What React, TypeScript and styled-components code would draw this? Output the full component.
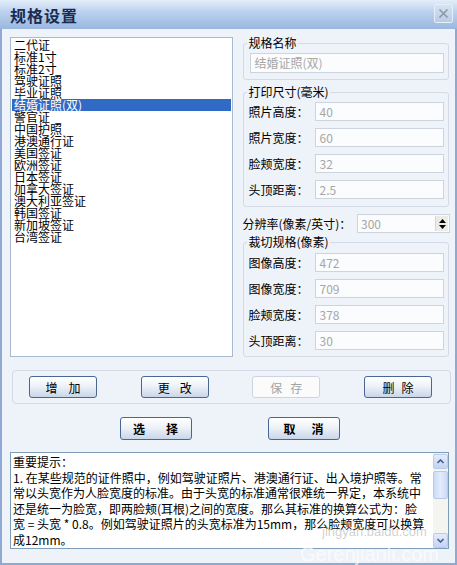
import React from 'react';
import styled, { createGlobalStyle } from 'styled-components';

const GlobalStyle = createGlobalStyle`
  html, body {
    margin: 0;
    padding: 0;
    background: #eef2f9;
  }
  body {
    font-family: "Noto Sans CJK SC", "Liberation Sans", sans-serif;
    font-size: 12px;
    color: #000;
  }
`;

const Window = styled.div`
  position: relative;
  width: 457px;
  height: 565px;
  display: flex;
  flex-direction: column;
  overflow: hidden;
  background: #eef2f9;
`;

const TitleBar = styled.div`
  height: 29px;
  flex: none;
  display: flex;
  align-items: center;
  justify-content: space-between;
  padding: 0 4px 0 10px;
  background: linear-gradient(180deg, #e4eefa 0%, #bcd2ef 40%, #9ab7df 100%);
`;

const Title = styled.span`
  font-size: 16px;
  font-weight: bold;
  letter-spacing: 1px;
  color: #182c52;
`;

const CloseButton = styled.div`
  width: 17px;
  height: 17px;
  display: flex;
  align-items: center;
  justify-content: center;
  border: 1px solid #e6eef8;
  border-radius: 2px;
  background: linear-gradient(180deg, #d6e3f3, #b8cbe6);
  margin-top: -3px;
`;

const Body = styled.div`
  flex: 1;
  display: flex;
  flex-direction: column;
  padding: 8px 5px 0 8px;
  border-left: 2px solid #8fa9d2;
  border-right: 2px solid #8fa9d2;
  border-bottom: 2px solid #8fa9d2;
`;

const TopRow = styled.div`
  display: flex;
  gap: 9px;
  height: 322px;
`;

const ListBox = styled.div`
  width: 224px;
  height: 320px;
  box-sizing: border-box;
  border: 1px solid #a9b9d0;
  background: #fff;
  padding: 1px 0 0 1px;
`;

const ListItem = styled.div<{ $selected?: boolean }>`
  height: 12px;
  line-height: 12px;
  padding-left: 2px;
  margin-right: 1px;
  white-space: nowrap;
  background: ${p => (p.$selected ? '#316ac5' : 'transparent')};
  color: ${p => (p.$selected ? '#fff' : '#000')};
`;

const RightPanel = styled.div`
  width: 208px;
  display: flex;
  flex-direction: column;
`;

const Group = styled.fieldset<{ $top: number; $pad: string }>`
  margin: ${p => p.$top}px 0 0 1px;
  width: 205px;
  box-sizing: border-box;
  border: 1px solid #d3dae6;
  border-radius: 3px;
  padding: ${p => p.$pad};
  display: flex;
  flex-direction: column;
  gap: 7px;
`;

const Legend = styled.legend<{ $shift: number }>`
  font-size: 12px;
  line-height: 12px;
  padding: 0 1px;
  margin-left: ${p => p.$shift}px;
`;

const FieldRow = styled.div`
  display: flex;
  align-items: center;
  gap: 7px;
`;

const FieldLabel = styled.span`
  width: 60px;
  white-space: nowrap;
`;

const Input = styled.div<{ $w: number; $h: number }>`
  width: ${p => p.$w}px;
  height: ${p => p.$h}px;
  box-sizing: border-box;
  border: 1px solid #cdd4de;
  background: #fbfcfd;
  color: #a6a6a6;
  line-height: ${p => p.$h - 2}px;
  padding-left: 3px;
  font-size: 12px;
  position: relative;
`;

const ResolutionRow = styled.div`
  display: flex;
  align-items: center;
  justify-content: space-between;
  margin-top: 7px;
  height: 19px;
`;

const Spinner = styled.div`
  position: absolute;
  right: 1px;
  top: 1px;
  width: 12px;
  height: 15px;
  background: #ecebe5;
  border-left: 1px solid #d8d8d0;
  display: flex;
  flex-direction: column;
  align-items: center;
  justify-content: center;
  gap: 2px;
`;

const ButtonsGroup = styled.div`
  margin: 11px 0 0 2px;
  width: 439px;
  height: 34px;
  box-sizing: border-box;
  border: 1px solid #d3dae6;
  border-radius: 4px;
  display: flex;
  align-items: center;
  justify-content: space-between;
  padding: 0 18px 0 16px;
`;

const Button = styled.div<{ $spacing: number; $bold?: boolean; $disabled?: boolean; $w: number; $h: number }>`
  width: ${p => p.$w}px;
  height: ${p => p.$h}px;
  box-sizing: border-box;
  display: flex;
  align-items: center;
  justify-content: center;
  gap: ${p => p.$spacing}px;
  border: 1px solid ${p => (p.$disabled ? '#cfd5de' : '#4a6791')};
  border-radius: 3px;
  background: ${p =>
    p.$disabled ? '#fbfbfb' : 'linear-gradient(180deg, #ffffff 0%, #eef2f8 45%, #c9d6e9 100%)'};
  color: ${p => (p.$disabled ? '#a3a3a3' : '#000')};
  font-weight: ${p => (p.$bold ? 'bold' : 'normal')};
  font-size: 12px;
  white-space: nowrap;
`;

const ActionRow = styled.div`
  margin-top: 13px;
  display: flex;
  justify-content: center;
  gap: 76px;
  padding-right: 1px;
`;

const TextArea = styled.div`
  margin: 12px 0 0 0;
  width: 439px;
  height: 97px;
  box-sizing: border-box;
  border: 1px solid #7f9db9;
  background: #fff;
  display: flex;
`;

const TextBody = styled.div`
  flex: 1;
  padding: 1px 0 0 2px;
  line-height: 15.6px;
  font-size: 12px;
  white-space: nowrap;
  overflow: hidden;
`;

const ScrollBar = styled.div`
  width: 15px;
  display: flex;
  flex-direction: column;
  background: #f4f4f0;
  padding: 1px 0 0 0;
`;

const ScrollButton = styled.div`
  width: 15px;
  height: 15px;
  box-sizing: border-box;
  border: 1px solid #b9cbeb;
  border-radius: 2px;
  background: linear-gradient(180deg, #e4ecfc, #c3d4f7);
  display: flex;
  align-items: center;
  justify-content: center;
`;

const ScrollThumb = styled.div`
  margin-top: 2px;
  width: 15px;
  height: 28px;
  box-sizing: border-box;
  border: 1px solid #b9cbeb;
  border-radius: 2px;
  background: linear-gradient(90deg, #cbdaf8, #e4ecfc 50%, #cbdaf8);
`;

const ScrollTrack = styled.div`
  flex: 1;
`;

const Watermark = styled.div<{ $size: number; $color: string }>`
  position: absolute;
  font-family: "Liberation Sans", sans-serif;
  font-size: ${p => p.$size}px;
  color: ${p => p.$color};
  white-space: nowrap;
  pointer-events: none;
`;

const items = [
  '二代证',
  '标准1寸',
  '标准2寸',
  '驾驶证照',
  '毕业证照',
  '结婚证照(双)',
  '警官证',
  '中国护照',
  '港澳通行证',
  '美国签证',
  '欧洲签证',
  '日本签证',
  '加拿大签证',
  '澳大利亚签证',
  '韩国签证',
  '新加坡签证',
  '台湾签证',
];

const printRows = [
  ['照片高度：', '40'],
  ['照片宽度：', '60'],
  ['脸颊宽度：', '32'],
  ['头顶距离：', '2.5'],
];

const cropRows = [
  ['图像高度：', '472'],
  ['图像宽度：', '709'],
  ['脸颊宽度：', '378'],
  ['头顶距离：', '30'],
];

const noteLines = [
  '重要提示：',
  '1.  在某些规范的证件照中，例如驾驶证照片、港澳通行证、出入境护照等。常',
  '常以头宽作为人脸宽度的标准。由于头宽的标准通常很难统一界定，本系统中',
  '还是统一为脸宽，即两脸颊(耳根)之间的宽度。那么其标准的换算公式为：脸',
  '宽 = 头宽 * 0.8。例如驾驶证照片的头宽标准为15mm，那么脸颊宽度可以换算',
  '成12mm。',
];

function Chevron({ up }: { up?: boolean }) {
  return (
    <svg width="7" height="5" viewBox="0 0 7 5">
      <path d={up ? 'M0.5 4 L3.5 1 L6.5 4' : 'M0.5 1 L3.5 4 L6.5 1'} fill="none" stroke="#4d6185" strokeWidth="1.6" />
    </svg>
  );
}

// each character is its own span so the button can spread them apart
function Spaced({ text }: { text: string }) {
  return (
    <>
      {text.split('').map((ch, i) => (
        <span key={i}>{ch}</span>
      ))}
    </>
  );
}

function FieldGroup({ title, rows, top, pad }: { title: string; rows: string[][]; top: number; pad: string }) {
  return (
    <Group $top={top} $pad={pad}>
      <Legend $shift={-1}>{title}</Legend>
      {rows.map(([label, value]) => (
        <FieldRow key={label}>
          <FieldLabel>{label}</FieldLabel>
          <Input $w={129} $h={19}>{value}</Input>
        </FieldRow>
      ))}
    </Group>
  );
}

export default function App() {
  return (
    <Window>
      <GlobalStyle />
      <TitleBar>
        <Title>规格设置</Title>
        <CloseButton>
          <svg width="11" height="11" viewBox="0 0 11 11">
            <path d="M1.5 1.5 L9.5 9.5 M9.5 1.5 L1.5 9.5" stroke="#8c96a4" strokeWidth="1.6" />
          </svg>
        </CloseButton>
      </TitleBar>
      <Body>
        <TopRow>
          <ListBox>
            {items.map(item => (
              <ListItem key={item} $selected={item === '结婚证照(双)'}>
                {item}
              </ListItem>
            ))}
          </ListBox>
          <RightPanel>
            <Group $top={0} $pad="4px 4px 6px 6px">
              <Legend $shift={-3}>规格名称</Legend>
              <Input $w={194} $h={20}>结婚证照(双)</Input>
            </Group>
            <FieldGroup title="打印尺寸(毫米)" rows={printRows} top={6} pad="4px 4px 7px 4px" />
            <ResolutionRow>
              <span>分辨率(像素/英寸)：</span>
              <Input $w={93} $h={19}>
                300
                <Spinner>
                  <svg width="7" height="4" viewBox="0 0 7 4">
                    <path d="M0 4 L3.5 0 L7 4 Z" fill="#000" />
                  </svg>
                  <svg width="7" height="4" viewBox="0 0 7 4">
                    <path d="M0 0 L3.5 4 L7 0 Z" fill="#000" />
                  </svg>
                </Spinner>
              </Input>
            </ResolutionRow>
            <FieldGroup title="裁切规格(像素)" rows={cropRows} top={3} pad="5px 4px 6px 4px" />
          </RightPanel>
        </TopRow>
        <ButtonsGroup>
          <Button $w={68} $h={22} $spacing={11}><Spaced text="增加" /></Button>
          <Button $w={68} $h={22} $spacing={10}><Spaced text="更改" /></Button>
          <Button $w={68} $h={22} $spacing={8} $disabled><Spaced text="保存" /></Button>
          <Button $w={68} $h={22} $spacing={7}><Spaced text="删除" /></Button>
        </ButtonsGroup>
        <ActionRow>
          <Button $w={72} $h={23} $spacing={21} $bold><Spaced text="选择" /></Button>
          <Button $w={72} $h={23} $spacing={16} $bold><Spaced text="取消" /></Button>
        </ActionRow>
        <TextArea>
          <TextBody>
            {noteLines.map((line, i) => (
              <div key={i}>{line}</div>
            ))}
          </TextBody>
          <ScrollBar>
            <ScrollButton>
              <Chevron up />
            </ScrollButton>
            <ScrollThumb />
            <ScrollTrack />
            <ScrollButton>
              <Chevron />
            </ScrollButton>
          </ScrollBar>
        </TextArea>
      </Body>
      <Watermark $size={13} $color="rgba(170,170,170,0.55)" style={{ left: 322, top: 524 }}>
        jingyan.baidu.com
      </Watermark>
      <Watermark $size={20} $color="rgba(255,255,255,0.7)" style={{ left: 300, top: 543 }}>
        Gerenjianli.com
      </Watermark>
    </Window>
  );
}
